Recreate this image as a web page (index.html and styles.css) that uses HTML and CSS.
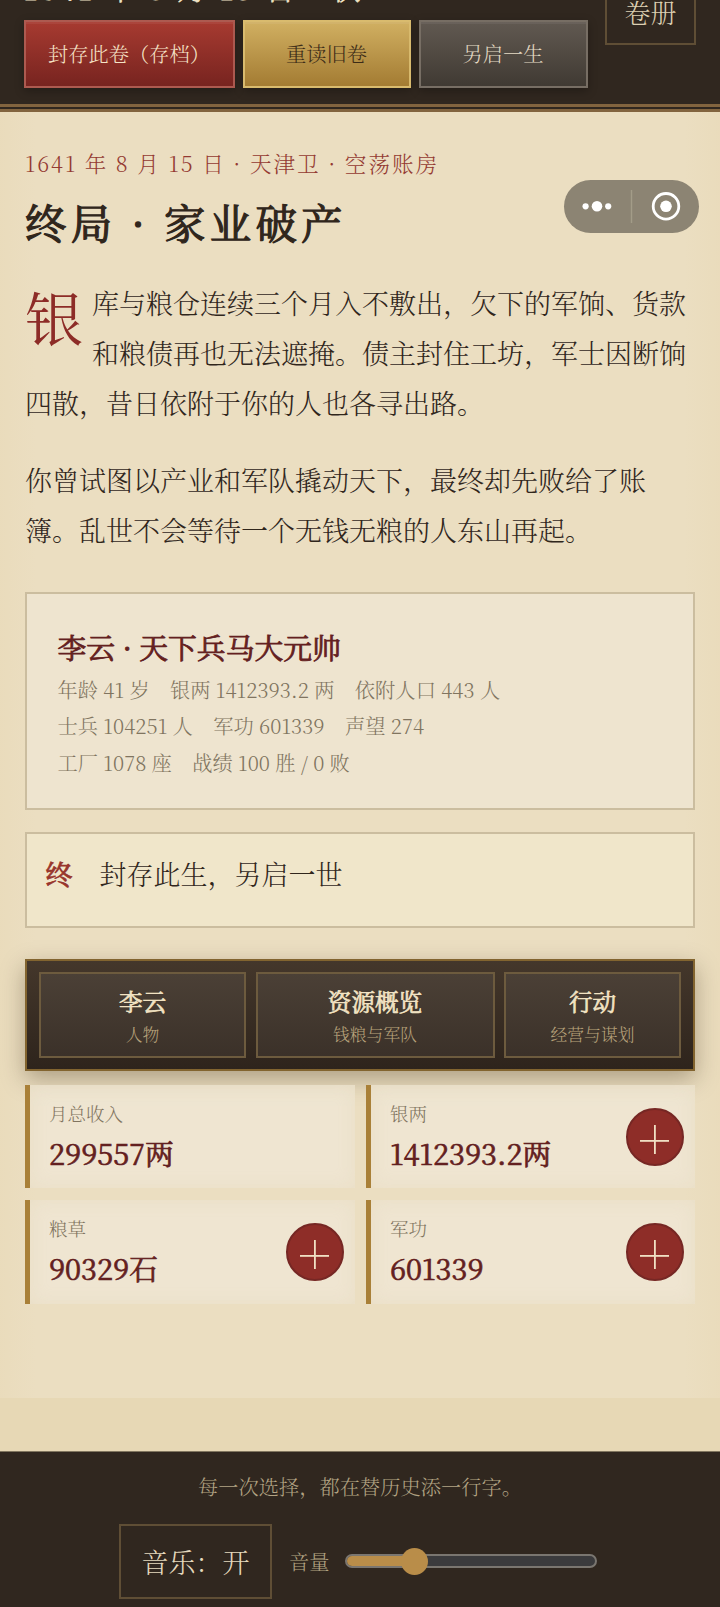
FILE: index.html
```html
<!DOCTYPE html>
<html lang="zh-CN">
<head>
<meta charset="utf-8">
<title>终局 · 家业破产</title>
<link rel="stylesheet" href="styles.css">
</head>
<body>
<header class="topbar">
  <div class="topbar-left">
    <div class="topbar-date">1641 年 8 月 15 日 · 秋</div>
    <div class="actions">
      <button class="btn btn-save">封存此卷（存档）</button>
      <button class="btn btn-load">重读旧卷</button>
      <button class="btn btn-new">另启一生</button>
    </div>
  </div>
  <button class="volume-btn">卷册</button>
</header>

<main class="paper">
  <div class="dateline">1641 年 8 月 15 日 · 天津卫 · 空荡账房</div>
  <h1 class="title">终局 · 家业破产</h1>
  <div class="story">
    <p class="lead">银库与粮仓连续三个月入不敷出，欠下的军饷、货款和粮债再也无法遮掩。债主封住工坊，军士因断饷四散，昔日依附于你的人也各寻出路。</p>
    <p>你曾试图以产业和军队撬动天下，最终却先败给了账簿。乱世不会等待一个无钱无粮的人东山再起。</p>
  </div>

  <section class="summary">
    <h2>李云 · 天下兵马大元帅</h2>
    <div>年龄 41 岁　银两 1412393.2 两　依附人口 443 人</div>
    <div>士兵 104251 人　军功 601339　声望 274</div>
    <div>工厂 1078 座　战绩 100 胜 / 0 败</div>
  </section>

  <button class="choice"><span class="choice-mark">终</span><span>封存此生，另启一世</span></button>

  <nav class="tabs">
    <button class="tab"><strong>李云</strong><small>人物</small></button>
    <button class="tab"><strong>资源概览</strong><small>钱粮与军队</small></button>
    <button class="tab"><strong>行动</strong><small>经营与谋划</small></button>
  </nav>

  <section class="stats">
    <div class="stat"><div><div class="label">月总收入</div><div class="value">299557两</div></div></div>
    <div class="stat"><div><div class="label">银两</div><div class="value">1412393.2两</div></div><button class="plus" aria-label="增加"></button></div>
    <div class="stat"><div><div class="label">粮草</div><div class="value">90329石</div></div><button class="plus" aria-label="增加"></button></div>
    <div class="stat"><div><div class="label">军功</div><div class="value">601339</div></div><button class="plus" aria-label="增加"></button></div>
  </section>
</main>

<footer class="footer">
  <div class="motto">每一次选择，都在替历史添一行字。</div>
  <div class="audio">
    <button class="music">音乐：开</button>
    <span class="vol-label">音量</span>
    <div class="slider"><div class="slider-fill"></div><div class="slider-thumb"></div></div>
  </div>
</footer>

<div class="capsule">
  <svg width="135" height="52" viewBox="0 0 135 52">
    <g fill="#fff"><circle cx="21.6" cy="26.3" r="3.1"/><circle cx="33" cy="26.3" r="5.3"/><circle cx="44.2" cy="26.3" r="3.1"/><circle cx="102" cy="26.3" r="5.8"/></g>
    <path d="M67.5 10v33" stroke="#a39c88" stroke-width="1.4"/>
    <circle cx="102" cy="26.3" r="12.8" fill="none" stroke="#fff" stroke-width="2.8"/>
  </svg>
</div>
</body>
</html>
```
FILE: styles.css
```css
* { box-sizing: border-box; }

body {
  margin: 0;
  height: 1607px;
  overflow: hidden;
  background: #e7d8b5;
  color: #30261c;
  font-family: "Noto Serif CJK SC", "Noto Serif SC", "Source Han Serif SC", "Noto Sans CJK SC", serif;
  font-size: 27px;
  font-weight: 300;
}

button {
  margin: 0;
  padding: 0;
  font: inherit;
  color: inherit;
  background: none;
  border: 0;
}

h1, h2, p { margin: 0; }

.topbar {
  height: 112px;
  display: flex;
  justify-content: space-between;
  align-items: flex-start;
  padding: 0 24px 0 23.5px;
  background: #30271f;
  border-bottom: 8px double #82643f;
  overflow: hidden;
}

.topbar-date {
  margin-top: -32px;
  height: 52px;
  line-height: 40px;
  font-size: 28.8px;
  letter-spacing: 3.1px;
  color: #efe2c4;
  -webkit-text-stroke: .8px;
  white-space: nowrap;
}

.actions {
  display: grid;
  grid-template-columns: 211px 168px 169px;
  gap: 8px;
}

.btn {
  height: 68px;
  border: 2px solid;
  font-size: 20.25px;
  line-height: 64px;
  white-space: nowrap;
  box-shadow: 0 3px 9px rgba(0, 0, 0, .28), inset 0 2px 0 rgba(255, 255, 255, .06);
}
.btn-save { color: #f5e3c6; border-color: #ad5a50; background: linear-gradient(#a83b31, #76231f) border-box; }
.btn-load { color: #3b2b17; border-color: #d9bb6e; background: linear-gradient(#d2b163, #a27a31) border-box; }
.btn-new { color: #e4dac4; border-color: #776e64; background: linear-gradient(#625a52, #3f3932) border-box; }

.volume-btn {
  width: 91px;
  height: 74px;
  margin-top: -29px;
  padding-top: 6px;
  border: 2px solid #5f4e35;
  color: #ddd0b2;
  font-size: 26px;
}

.paper {
  height: 1286px;
  padding: 0 25px;
  background: linear-gradient(90deg, rgba(226, 204, 156, .14), rgba(226, 204, 156, 0) 5%, rgba(226, 204, 156, 0) 95%, rgba(226, 204, 156, .14)), #ebdec1;
  overflow: hidden;
}

.dateline {
  margin-top: 31px;
  height: 39px;
  line-height: 39px;
  font-size: 21.6px;
  letter-spacing: 2px;
  color: #943a32;
  white-space: nowrap;
}

.title {
  height: 80px;
  line-height: 79px;
  font-size: 41.4px;
  font-weight: 400;
  -webkit-text-stroke: 1.2px;
  letter-spacing: 4.3px;
}

.story {
  margin-top: 16px;
  line-height: 49.95px;
}
.story p + p { margin-top: 27px; }
.lead::first-letter {
  float: left;
  font-size: 58.3px;
  font-weight: 400;
  line-height: 64px;
  padding-top: 6px;
  padding-right: 8.7px;
  color: #8d2c27;
}

.summary {
  margin-top: 37px;
  height: 218px;
  padding: 30px 30.5px;
  border: 2px solid #cbbd9f;
  background: #eee4cf;
  color: #80745f;
  font-size: 20.25px;
  letter-spacing: .05px;
  line-height: 36.45px;
}
.summary h2 {
  height: 48px;
  line-height: 46px;
  font-size: 28.8px;
  font-weight: 400;
  letter-spacing: 0;
  -webkit-text-stroke: .8px;
  color: #632020;
}

.choice {
  width: 100%;
  height: 96px;
  margin-top: 22px;
  padding: 0 18.5px 12px;
  display: flex;
  align-items: center;
  gap: 27px;
  border: 2px solid #cbbd9f;
  background: #f0e6ca;
}
.choice-mark { font-weight: 400; -webkit-text-stroke: .8px; color: #98352c; }

.tabs {
  margin-top: 31px;
  height: 112.5px;
  padding: 11.5px 12px;
  display: grid;
  grid-template-columns: 207px 239px 177px;
  gap: 9.5px;
  border: 2px solid #82642f;
  background: linear-gradient(#44372b, #2e241c);
  box-shadow: 0 8px 22px rgba(60, 44, 20, .36);
}
.tab {
  height: 86px;
  display: flex;
  flex-direction: column;
  align-items: center;
  border: 2px solid #6d5b3e;
  background: linear-gradient(#4b4036, #3b3129);
  color: #f2e3c3;
}
.tab strong { margin-top: 10px; font-size: 23.6px; font-weight: 400; -webkit-text-stroke: .7px; line-height: 34px; }
.tab small { margin-top: 1px; font-size: 16.8px; line-height: 30px; color: #b7a27b; }

.stats {
  margin-top: 13.5px;
  display: grid;
  grid-template-columns: 330px 329px;
  gap: 12px 11px;
}
.stat {
  height: 103.5px;
  padding: 0 11.5px 0 19px;
  display: flex;
  justify-content: space-between;
  align-items: center;
  border-left: 5px solid #a98038;
  background: rgba(239, 230, 212, .82);
  box-shadow: inset 0 0 18px rgba(214, 190, 140, .16);
}
.label { font-size: 18.5px; line-height: 30px; color: #80745f; }
.value { font-size: 28.7px; font-weight: 400; -webkit-text-stroke: .7px; line-height: 46px; margin-top: 2px; color: #632020; }

.plus {
  width: 58px;
  height: 58px;
  border: 2px solid #762724;
  border-radius: 50%;
  background:
    linear-gradient(#f0dfc3, #f0dfc3) 50% 58% / 29px 1.8px no-repeat,
    linear-gradient(#f0dfc3, #f0dfc3) 50% 60% / 1.8px 29px no-repeat,
    #8e2d28;
}

.footer {
  margin-top: 53px;
  height: 156px;
  border-top: 1px solid #81765f;
  background: #30271f;
  color: #e5d9bd;
}
.motto {
  padding-top: 16px;
  height: 72px;
  line-height: 38px;
  text-align: center;
  font-size: 20.25px;
  color: #b3a484;
}
.audio {
  display: flex;
  align-items: center;
  padding-left: 119px;
}
.music {
  width: 153px;
  height: 75px;
  border: 2px solid #5f4e35;
}
.vol-label { margin-left: 17px; width: 55.5px; font-size: 20.25px; color: #b3a484; }
.slider {
  position: relative;
  width: 252px;
  height: 14px;
  margin-bottom: 1px;
  border: 2px solid #7a7670;
  border-radius: 7px;
  background: #3b3b3d;
}
.slider-fill { width: 70px; height: 10px; border-radius: 5px 0 0 5px; background: #b98d49; }
.slider-thumb {
  position: absolute;
  left: 54px;
  top: -8.5px;
  width: 27px;
  height: 27px;
  border-radius: 50%;
  background: #b98d49;
}

.capsule {
  position: absolute;
  left: 564px;
  top: 180px;
  width: 135px;
  height: 52.5px;
  border-radius: 27px;
  background: #8c8473;
}
.capsule svg { display: block; }
```
